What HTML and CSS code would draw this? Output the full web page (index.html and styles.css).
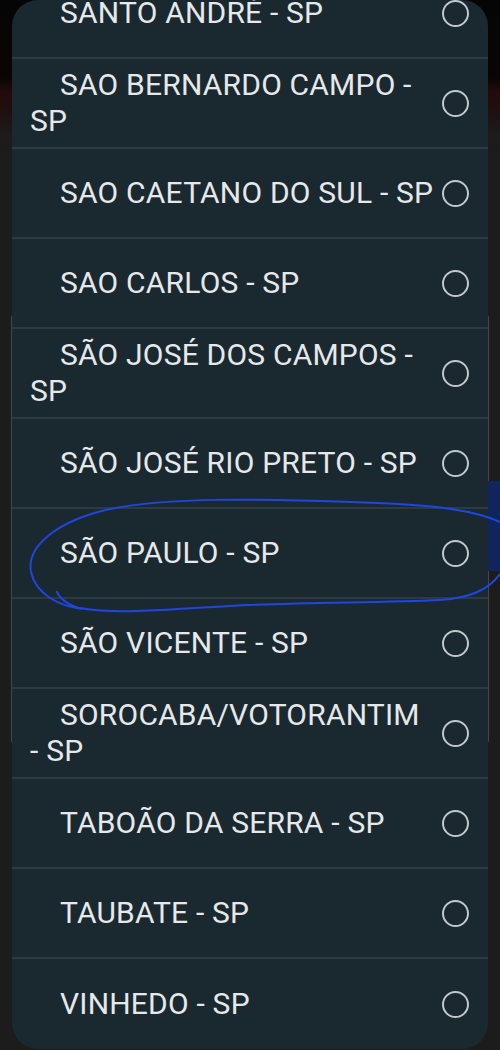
FILE: index.html
```html
<!DOCTYPE html>
<html lang="pt-BR">
<head>
  <meta charset="UTF-8">
  <title>Selecione a cidade</title>
  <meta name="viewport" content="width=device-width, initial-scale=1.0">
  <link rel="stylesheet" href="styles.css">
</head>
<body>

  <div class="backdrop-card"></div>
  <div class="side-tab"></div>

  <div class="dialog">
    <ul class="city-list">
      <li class="city"><span class="name">SANTO ANDRÉ - SP</span><span class="radio"></span></li>
      <li class="city"><span class="name">SAO BERNARDO CAMPO - SP</span><span class="radio"></span></li>
      <li class="city"><span class="name">SAO CAETANO DO SUL - SP</span><span class="radio"></span></li>
      <li class="city"><span class="name">SAO CARLOS - SP</span><span class="radio"></span></li>
      <li class="city"><span class="name">SÃO JOSÉ DOS CAMPOS - SP</span><span class="radio"></span></li>
      <li class="city"><span class="name">SÃO JOSÉ RIO PRETO - SP</span><span class="radio"></span></li>
      <li class="city"><span class="name">SÃO PAULO - SP</span><span class="radio"></span></li>
      <li class="city"><span class="name">SÃO VICENTE - SP</span><span class="radio"></span></li>
      <li class="city"><span class="name">SOROCABA/VOTORANTIM - SP</span><span class="radio"></span></li>
      <li class="city"><span class="name">TABOÃO DA SERRA - SP</span><span class="radio"></span></li>
      <li class="city"><span class="name">TAUBATE - SP</span><span class="radio"></span></li>
      <li class="city"><span class="name">VINHEDO - SP</span><span class="radio"></span></li>
    </ul>
  </div>

  <!-- hand drawn mark around SÃO PAULO -->
  <svg class="scribble" width="500" height="1050" viewBox="0 0 500 1050">
    <path d="M57 592 C 62 602, 72 606, 82 609
             C 60 606, 36 595, 31 572
             C 26 545, 60 520, 110 509
             C 170 497, 260 499, 350 502
             C 420 504, 470 508, 500 522
             M 500 574
             C 488 590, 470 598, 440 600
             C 380 603, 300 602, 230 606
             C 170 609, 120 615, 80 608"
          fill="none" stroke="#1f46e0" stroke-width="2" stroke-linecap="round"/>
  </svg>

</body>
</html>
```

FILE: styles.css
```css
body {
  margin: 0;
  height: 1050px;
  overflow: hidden;
  font-family: Roboto, "Noto Sans", Arial, sans-serif;
  background: linear-gradient(to bottom, #050505 0px, #0a0404 78px, #240b0b 92px, #1f0f0f 110px, #1d1b1b 135px, #1c1c1c 160px);
  position: relative;
}

.backdrop-card {
  position: absolute;
  left: 11px;
  right: 11px;
  top: 312px;
  height: 430px;
  border: 2px solid #474747;
  border-radius: 6px;
  background: #222;
}

.side-tab {
  position: absolute;
  right: 0;
  top: 481px;
  width: 12px;
  height: 90px;
  background: #10245e;
}

.dialog {
  position: relative;
  margin: 0 12px;
  height: 1049px;
  background: #1a2830;
  border-radius: 26px;
  overflow: hidden;
}

.city-list {
  list-style: none;
  margin: -31px 0 0 0;
  padding: 0;
}

.city {
  display: flex;
  align-items: center;
  box-sizing: border-box;
  height: 90px;
  padding: 0 19px 0 18px;
  border-bottom: 2px solid #2c3a42;
}

.city:last-child {
  border-bottom: none;
}

.name {
  flex: 1;
  color: #e6e8ea;
  font-size: 30px;
  line-height: 36px;
  letter-spacing: 0.2px;
  text-indent: 30px;
  padding-right: 7.5px;
}

.radio {
  flex: none;
  width: 23px;
  height: 23px;
  border: 2.5px solid #c3c8cc;
  border-radius: 50%;
}

.scribble {
  position: absolute;
  left: 0;
  top: 0;
}
```
